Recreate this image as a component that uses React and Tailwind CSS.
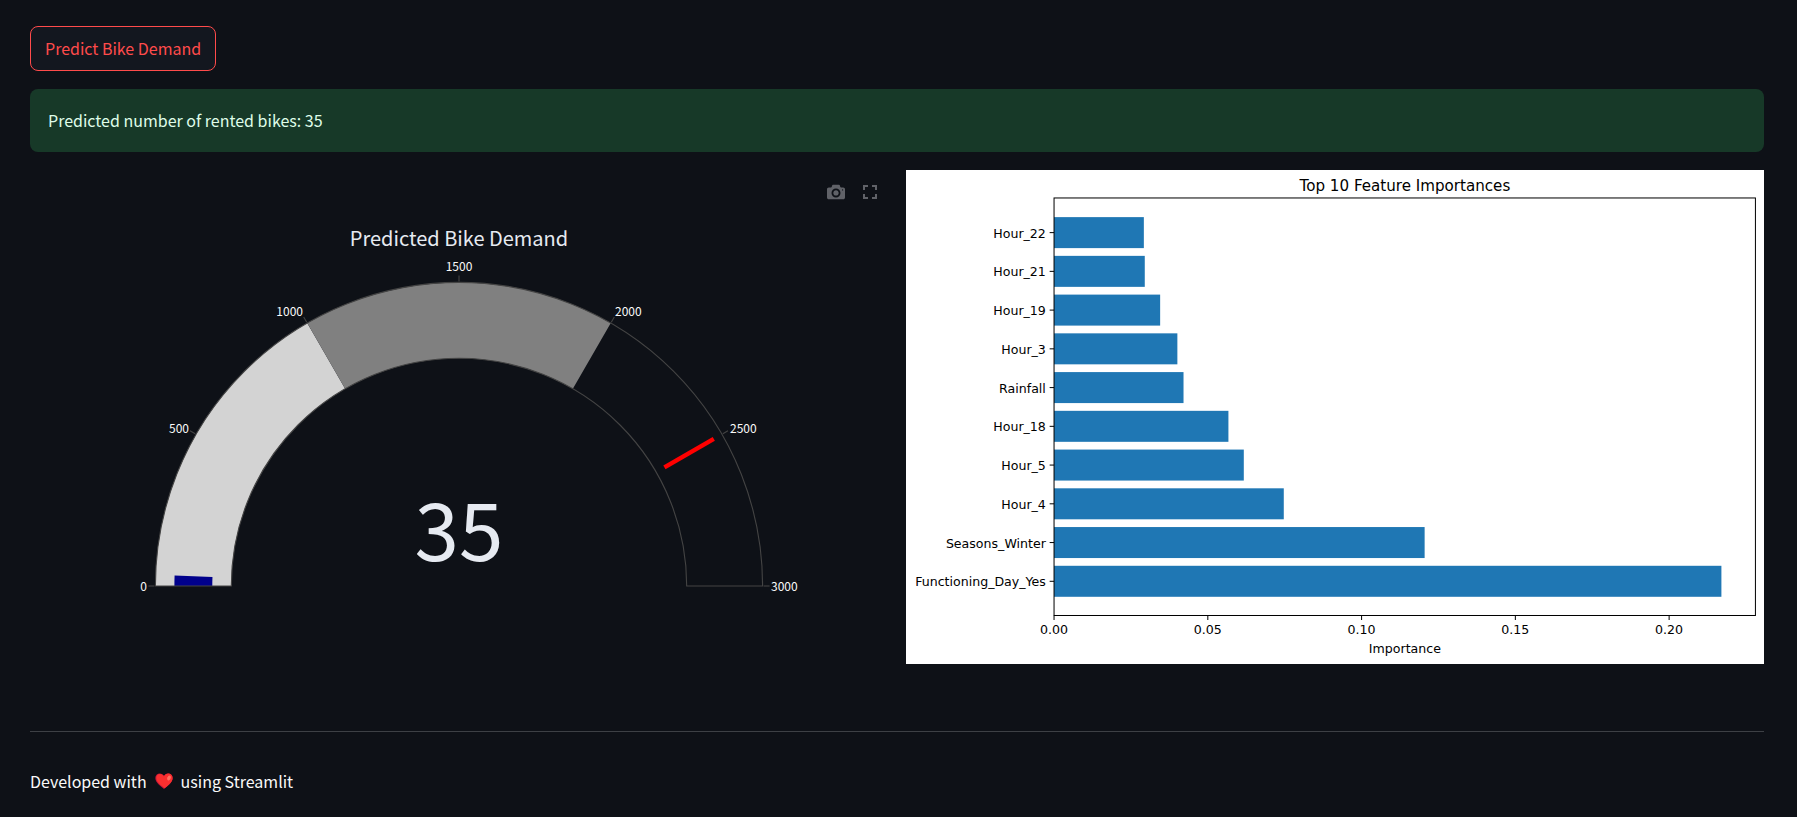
import { MdFullscreen } from "react-icons/md";

const CENTER_X = 429;
const CENTER_Y = 416;
const OUTER_R = 303.6;
const INNER_R = 227.7;
const GAUGE_MAX = 3000;

function polar(value, radius) {
  const angle = Math.PI * (1 - value / GAUGE_MAX);
  return [CENTER_X + radius * Math.cos(angle), CENTER_Y - radius * Math.sin(angle)];
}

function band(from, to, inner, outer) {
  const [x1, y1] = polar(from, outer);
  const [x2, y2] = polar(to, outer);
  const [x3, y3] = polar(to, inner);
  const [x4, y4] = polar(from, inner);
  return `M${x1} ${y1}A${outer} ${outer} 0 0 1 ${x2} ${y2}L${x3} ${y3}A${inner} ${inner} 0 0 0 ${x4} ${y4}Z`;
}

const GAUGE_TICKS = [
  { value: 0, x: 117, y: 421, anchor: "end" },
  { value: 500, x: 159, y: 263, anchor: "end" },
  { value: 1000, x: 273, y: 146, anchor: "end" },
  { value: 1500, x: 429, y: 101, anchor: "middle" },
  { value: 2000, x: 585, y: 146, anchor: "start" },
  { value: 2500, x: 700, y: 263, anchor: "start" },
  { value: 3000, x: 741, y: 421, anchor: "start" },
];

function Gauge() {
  const [tx1, ty1] = polar(2500, 237.2);
  const [tx2, ty2] = polar(2500, 294.2);
  return (
    <svg viewBox="0 0 858 506" className="block h-auto w-full" role="img" aria-label="Predicted Bike Demand: 35">
      <text x="429" y="76" textAnchor="middle" className="fill-[#e6eaf1] text-[20px]">
        Predicted Bike Demand
      </text>
      <path d={band(0, 1000, INNER_R, OUTER_R)} fill="#d3d3d3" />
      <path d={band(1000, 2000, INNER_R, OUTER_R)} fill="#808080" />
      <path d={band(0, 35, 246.7, 284.6)} fill="#00008b" />
      <line x1={tx1} y1={ty1} x2={tx2} y2={ty2} stroke="#ff0000" strokeWidth="4.5" />
      <path d={band(0, GAUGE_MAX, INNER_R, OUTER_R)} fill="none" stroke="#444" strokeWidth="1.1" />
      {GAUGE_TICKS.map((t) => {
        const [x1, y1] = polar(t.value, OUTER_R + 1);
        const [x2, y2] = polar(t.value, OUTER_R + 7);
        return (
          <g key={t.value}>
            <line x1={x1} y1={y1} x2={x2} y2={y2} stroke="#444" strokeWidth="1.1" />
            <text x={t.x} y={t.y} textAnchor={t.anchor} className="fill-[#fafafa] text-[12px]">
              {t.value}
            </text>
          </g>
        );
      })}
      <text x="429" y="391" textAnchor="middle" className="fill-[#e6eaf1] text-[80px]">
        35
      </text>
    </svg>
  );
}

const FEATURES = [
  ["Hour_22", 0.0292],
  ["Hour_21", 0.0295],
  ["Hour_19", 0.0345],
  ["Hour_3", 0.0401],
  ["Rainfall", 0.0421],
  ["Hour_18", 0.0567],
  ["Hour_5", 0.0617],
  ["Hour_4", 0.0747],
  ["Seasons_Winter", 0.1205],
  ["Functioning_Day_Yes", 0.217],
];

const X_TICKS = [0, 0.05, 0.1, 0.15, 0.2];
const AXIS = { left: 117.5, right: 674.2, top: 22.2, bottom: 353.6 };
const UNIT = 2441;

function FeatureChart() {
  return (
    <svg
      viewBox="0 0 681 392"
      className="block h-auto w-full bg-white font-['DejaVu_Sans',sans-serif]"
      role="img"
      aria-label="Top 10 Feature Importances"
    >
      <text x="396" y="17" textAnchor="middle" className="text-[12px]">
        Top 10 Feature Importances
      </text>
      {FEATURES.map(([name, value], i) => {
        const y = 49.7 + i * 30.75;
        return (
          <g key={name}>
            <rect x={AXIS.left} y={y - 12.3} width={value * UNIT} height="24.6" fill="#1f77b4" />
            <line x1={AXIS.left - 3.5} x2={AXIS.left} y1={y} y2={y} stroke="#000" strokeWidth="0.8" />
            <text x="111" y={y + 4} textAnchor="end" className="text-[10px]">
              {name}
            </text>
          </g>
        );
      })}
      {X_TICKS.map((t) => {
        const x = AXIS.left + t * UNIT;
        return (
          <g key={t}>
            <line x1={x} x2={x} y1={AXIS.bottom} y2={AXIS.bottom + 3.5} stroke="#000" strokeWidth="0.8" />
            <text x={x} y="368" textAnchor="middle" className="text-[10px]">
              {t.toFixed(2)}
            </text>
          </g>
        );
      })}
      <rect
        x={AXIS.left}
        y={AXIS.top}
        width={AXIS.right - AXIS.left}
        height={AXIS.bottom - AXIS.top}
        fill="none"
        stroke="#000"
        strokeWidth="0.8"
      />
      <text x="396" y="383" textAnchor="middle" className="text-[10px]">
        Importance
      </text>
    </svg>
  );
}

function CameraIcon() {
  return (
    <svg viewBox="0 0 1000 1000" className="size-[18px]" fill="currentColor" aria-hidden="true">
      <path
        transform="matrix(1 0 0 -1 0 850)"
        d="m500 450c-83 0-150-67-150-150 0-83 67-150 150-150 83 0 150 67 150 150 0 83-67 150-150 150z m400 150h-120c-16 0-34 13-39 29l-31 93c-6 15-23 28-40 28h-340c-16 0-34-13-39-28l-31-94c-6-15-23-28-40-28h-120c-55 0-100-45-100-100v-450c0-55 45-100 100-100h800c55 0 100 45 100 100v450c0 55-45 100-100 100z m-400-550c-138 0-250 112-250 250 0 138 112 250 250 250 138 0 250-112 250-250 0-138-112-250-250-250z m365 380c-19 0-35 16-35 35 0 19 16 35 35 35 19 0 35-16 35-35 0-19-16-35-35-35z"
      />
    </svg>
  );
}

function HeartIcon() {
  return (
    <svg viewBox="0 0 18 16" className="h-4 w-[18px]" role="img" aria-label="love">
      <path
        d="M9 16C6.500 14 .3 9.800.3 5.100.3 2.300 2.300.4 4.800.4 6.600.4 8.100 1.300 9 2.800 9.900 1.300 11.400.4 13.200.4c2.500 0 4.500 1.900 4.500 4.700C17.700 9.800 11.500 14 9 16z"
        fill="#c3163a"
      />
      <path
        d="M9.600 15.200C7 13 1.300 9.700 1.300 4.800 1.300 2.600 3 1 5 1c1.900 0 3.300 1 4 2.600C9.800 1.800 11.200.5 13.200.5c2.500 0 4.400 1.800 4.400 4.500 0 4.500-5.600 8.300-8 10.200z"
        fill="#f92f2f"
      />
      <ellipse cx="14" cy="5" rx="1.700" ry="2.500" transform="rotate(28 14 5)" fill="#ff7261" />
    </svg>
  );
}

export default function App() {
  return (
    <main className="min-h-screen bg-[#0e1117] pt-[26px] pr-[33px] pb-6 pl-[30px] font-['Noto_Sans_CJK_SC',sans-serif] text-base text-[#fafafa]">
      <button
        type="button"
        className="flex h-[45px] items-center rounded-lg border border-[#ff4b4b] bg-[#13171f] px-3.5 pb-0.5 text-[#ff4b4b]"
      >
        Predict Bike Demand
      </button>

      <div role="status" className="mt-[18px] flex h-[63px] items-center rounded-lg bg-[#173928] px-[18px] pb-0.5 text-[#dffde9]">
        Predicted number of rented bikes: 35
      </div>

      <div className="mt-[18px] grid grid-cols-2 items-start gap-[18px]">
        <section className="relative">
          <Gauge />
          <div className="absolute top-2.5 right-1.5 flex items-center gap-[13px] text-[#606268]">
            <button type="button" aria-label="Download plot as a png">
              <CameraIcon />
            </button>
            <button type="button" aria-label="Fullscreen">
              <MdFullscreen className="size-6" />
            </button>
          </div>
        </section>
        <FeatureChart />
      </div>

      <hr className="mt-[55px] border-[#3d4045]" />

      <footer className="mt-[37px] flex items-center gap-2">
        <span>Developed with</span>
        <HeartIcon />
        <span>using Streamlit</span>
      </footer>
    </main>
  );
}
